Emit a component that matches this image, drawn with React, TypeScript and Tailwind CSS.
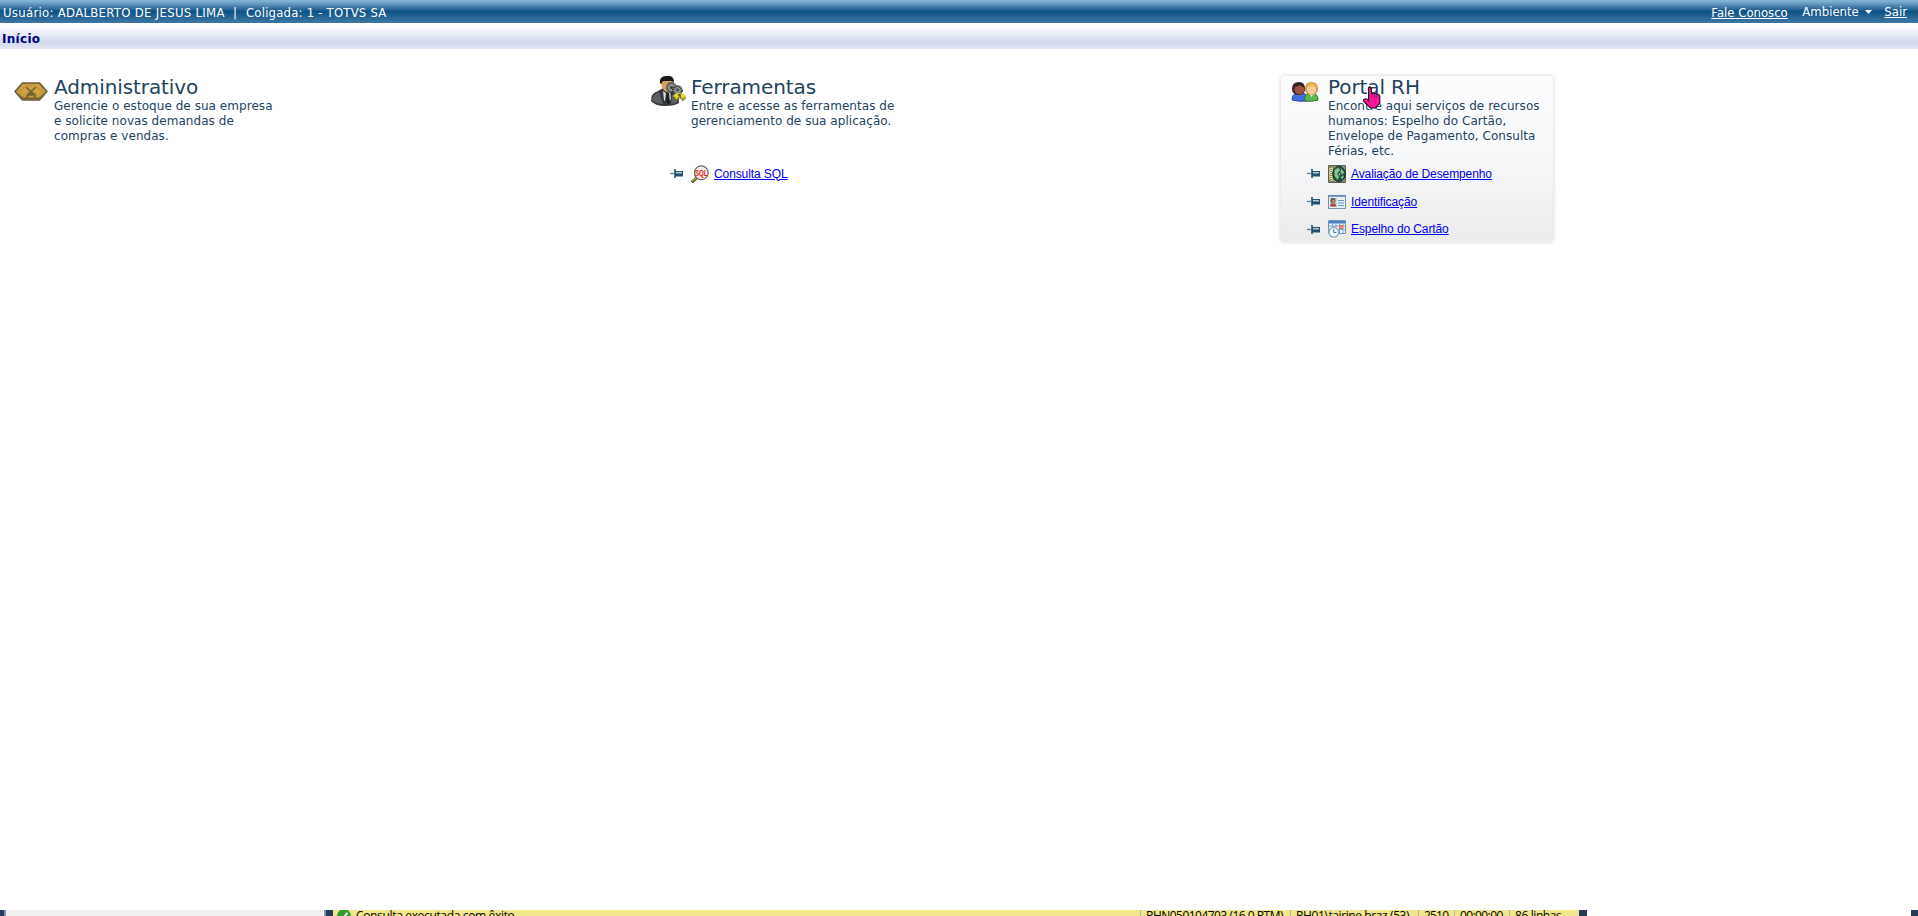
import React from 'react';

const PinIcon: React.FC = () => (
    <svg className="w-[13px] h-[9px] shrink-0" viewBox="0 0 13 9">
        <path d="M0 4.5h4" stroke="#5f859c" strokeWidth="1.4" />
        <path d="M5 0v9" stroke="#24506c" strokeWidth="1.6" />
        <path d="M5 2h8v5.5H5z" fill="#24506c" />
        <path d="M6 3.7h6" stroke="#b4cbd8" strokeWidth="1.5" />
    </svg>
);

const BoxIcon: React.FC = () => (
    <svg className="w-[34px] h-[22px]" viewBox="0 0 34 22">
        <path d="M8.5 2h17L33 10.5 25.5 19h-17L1 10.5z" fill="#c39739" stroke="#66603f" strokeWidth="1.6" />
        <path d="M2.5 11.5l6.5 7h16l6.5-7-6.5 5H9z" fill="#7b6334" />
        <path d="M9.5 3.5h15l5.5 6.5-6 5.5H10L4 10z" fill="#cfa144" />
        <path d="M12 6l5 4.5-4.5 4M22 6l-5 4.5 5 4M12 17l5-5 5 5M14 14h6" fill="none" stroke="#6f6231" strokeWidth="1.4" />
        <path d="M6 10l5-4 4 4-5 4M28 10l-5-4-4 4 5 4M13 5h8" fill="none" stroke="#a77a2c" strokeDasharray="1 1" />
    </svg>
);

const ToolsIcon: React.FC = () => (
    <svg className="w-[36px] h-[30px]" viewBox="0 0 36 30">
        <path d="M0 25q0-8 7-10l5-3h8l5 4q3 3 3 11-4 3-14 3T0 25z" fill="#36393b" />
        <path d="M1 24q1-6 7-8l4 12q-8 0-11-4zM20 27l2-10 5 9q-3 2-7 2z" fill="#5b5f61" />
        <path d="M12 15l4 3 3-3 1 8-4 5-3-4z" fill="#dededc" />
        <path d="M15 17h3l1 9-2 3-3-3z" fill="#202326" />
        <path d="M10 5q0-4 6-4 7 0 7 6 0 8-7 9-6-2-6-11z" fill="#d5a35d" />
        <path d="M9 7Q8 0 16 0q7-1 7 6l-3-1-8 0-2 3z" fill="#151719" />
        <circle cx="20.5" cy="11.5" r="4.6" fill="#8d9090" stroke="#3b4042" strokeWidth="2" strokeDasharray="1.2 .8" />
        <circle cx="20.5" cy="11.5" r="1.5" fill="#383c3e" />
        <circle cx="26.5" cy="14.5" r="4.4" fill="#8d9292" stroke="#303537" strokeWidth="2" strokeDasharray="1.2 .8" />
        <circle cx="26.5" cy="14" r="1.4" fill="#45494a" />
        <path d="M22 20q2-3 6-3t7 3l-1 4-5-2-4 2z" fill="#e3d72c" />
        <path d="M23 21l2 3 4-3 3 3 3-3" fill="none" stroke="#6e7423" strokeWidth="1.8" strokeDasharray="2 .8" />
        <circle cx="28.5" cy="19" r="1.5" fill="#5c6220" />
    </svg>
);

const PeopleIcon: React.FC = () => (
    <svg className="w-[28px] h-[22px]" viewBox="0 0 28 22">
        <path d="M1 19q0-6 5-7h7q4 3 3 8-8 1-15-1z" fill="#3f6ee0" stroke="#2a4aa5" />
        <path d="M14 20q-1-7 4-8h4q5 1 5 7-6 2-13 1z" fill="#5bb84c" stroke="#2b742c" />
        <path d="M17 11l3.5 5 3.5-5z" fill="#f3e7c3" />
        <path d="M6 12l3 3 3-3z" fill="#ae6048" />
        <path d="M1 8q0-7 7-7 6 0 6 7 0 5-5 6-8 0-8-6z" fill="#3a2624" />
        <ellipse cx="8.5" cy="8.5" rx="5" ry="4.8" fill="#a0513f" />
        <path d="M3.5 6q1-4 5-4t5 5q-3-2-5-3-2 2-5 2z" fill="#2e2326" />
        <path d="M14 8q0-7 6.5-7T27 8q0 5-6.5 6Q14 13 14 8z" fill="#cc9139" />
        <ellipse cx="20.5" cy="8.7" rx="4.8" ry="4.8" fill="#f6cc97" />
        <path d="M15 7q1-5 6-5t5 5q-3-1-5-3-2 2-6 3z" fill="#e5b257" />
    </svg>
);

const SqlIcon: React.FC = () => (
    <svg className="w-[18px] h-[18px]" viewBox="0 0 18 18">
        <path d="M.8 17.2l5.5-5" stroke="#3d4426" strokeWidth="3" />
        <path d="M1 16.5l5-4.5" stroke="#bcc838" strokeWidth="1.2" />
        <circle cx="10.3" cy="7.7" r="6.9" fill="#fbeae6" stroke="#6d6866" strokeWidth="1.2" />
        <text x="4" y="10.8" fontFamily="Liberation Sans, sans-serif" fontSize="8.5" fontWeight="bold" textLength="12.6" lengthAdjust="spacingAndGlyphs" fill="#d82a20">SQL</text>
    </svg>
);

const EvaluationIcon: React.FC = () => (
    <svg className="w-[18px] h-[18px]" viewBox="0 0 18 18">
        <path d="M.5.5h17v17H.5z" fill="#8d937e" stroke="#5a6352" />
        <path d="M1 2l4-1v16l-4-2z" fill="#f2e6ac" stroke="#5b6042" strokeWidth=".6" />
        <path d="M3 2v13" stroke="#393e2d" strokeWidth="1.2" strokeDasharray="1 1" />
        <ellipse cx="11" cy="9" rx="6.3" ry="7.6" fill="#245544" stroke="#152e23" />
        <path d="M6.5 5l4-2.5 1.5 3L9 8.5l2 3-1.5 3.5-3-4.5zM13 3.5l3.5 4-2.5 2-1.5-2zM12.5 12l3.5-1.5-1.5 4z" fill="#7fc78a" />
        <path d="M10.5 8l2 1-1 1.5z" fill="#d8ead0" />
    </svg>
);

const IdCardIcon: React.FC = () => (
    <svg className="w-[18px] h-[14px]" viewBox="0 0 18 14">
        <path d="M.5.5h17v13H.5z" fill="#e6f0fa" stroke="#7790ab" />
        <path d="M.5 1h17" stroke="#5b82b4" strokeWidth="1.5" />
        <path d="M2 3h6.5v8.5H2z" fill="#b7b6b5" />
        <circle cx="5" cy="5.5" r="2.4" fill="#694a3d" />
        <circle cx="5.3" cy="6" r="1.4" fill="#c99268" />
        <path d="M2 11.5q0-3 3-3t3.5 3z" fill="#a84c32" />
        <path d="M10 5.5h6M10 8h6M10 10.5h6" stroke="#6d96c4" />
    </svg>
);

const CalendarIcon: React.FC = () => (
    <svg className="w-[18px] h-[18px]" viewBox="0 0 18 18">
        <path d="M.5.5h17v13H.5z" fill="#edf4fc" stroke="#6f93bd" />
        <path d="M1 1h16v2.5H1z" fill="#4a82c2" />
        <path d="M4.5 3v10M8 3v10M11.5 3v10M15 3v10M1 6h16M1 9.5h16" stroke="#7da6d3" />
        <path d="M11 5h4v4h-4z" fill="#ed6c45" />
        <path d="M12.5 6.5h1.3v1.3h-1.3z" fill="#fbd9c8" />
        <circle cx="5.8" cy="12.3" r="4.9" fill="#f3f9fc" stroke="#7fa5c0" strokeWidth="1.3" />
        <path d="M5.8 9v3.5h2.7" fill="none" stroke="#396c93" />
    </svg>
);

const HandCursor: React.FC = () => (
    <svg className="absolute left-[82px] top-[10px] w-[18px] h-[23px]" viewBox="0 0 18 23">
        <path d="M5.5 1.5Q6.5.2 8 1.5l.8 6q1.3-1.3 2.7.3 1.5-.9 2.5.8 1.8-.6 2.8 1.2v7.1L12.5 22H7.4L1 15.7q-1.1-2 .7-2.8 1.5-.5 3 .8L5.6 15z" fill="#ff1499" stroke="#181018" strokeWidth="1.1" />
        <path d="M8.8 7.5v3.7M11.5 8v3.5M14 9v3" stroke="#702050" strokeWidth=".8" />
    </svg>
);

const MenuLink: React.FC<{ label: string; icon: React.ReactNode; className?: string }> = ({ label, icon, className }) => (
    <li className={`flex items-center pl-[26px] ${className ?? 'h-[27px]'}`}>
        <PinIcon />
        <span className="ml-[8px] mr-[5px] flex w-[18px] shrink-0 justify-center">{icon}</span>
        <a href="#" className="font-['Liberation_Sans',sans-serif] text-[12px] leading-[14px] tracking-[-0.1px] text-[#0000ee] underline whitespace-nowrap">{label}</a>
    </li>
);

const ModuleCard: React.FC<{
    title: string;
    lines: string[];
    icon: React.ReactNode;
    className?: string;
    children?: React.ReactNode;
}> = ({ title, lines, icon, className, children }) => (
    <section className={`relative w-[272px] h-[166px] ${className ?? ''}`}>
        <div className="flex h-[84px]">
            <div className="w-[47px] shrink-0">{icon}</div>
            <div className="whitespace-nowrap text-[#234260]">
                <h2 className="text-[20px] leading-[23px] tracking-[-0.1px]">{title}</h2>
                {lines.map(line => <p key={line} className="text-[12px] leading-[15px] tracking-[0.05px]">{line}</p>)}
            </div>
        </div>
        <ul>{children}</ul>
    </section>
);

// Small status cell of the query result bar
const StatusCell: React.FC<{ text: string; className: string }> = ({ text, className }) => (
    <span className={`shrink-0 border-l border-[#b9b894] pl-[5px] h-[18px] mt-[-2px] ${className}`}>{text}</span>
);

export default function App() {
    return (
        <div className="flex h-[916px] w-[1918px] flex-col overflow-hidden bg-white font-['DejaVu_Sans',sans-serif]">
            <header className="flex h-[23px] shrink-0 items-center justify-between bg-linear-to-b from-[#7eb1d4] from-5% via-[#0b5386] via-50% to-[#3c78a5] pl-[3px] pr-[11px] text-[13px] text-white font-['DejaVu_Sans_Condensed','DejaVu_Sans',sans-serif]">
                <div className="flex whitespace-pre pt-[2px]">
                    <span className="w-[221px] tracking-[0.3px]">Usuário: ADALBERTO DE JESUS LIMA</span>
                    <span className="w-[22px] text-center">|</span>
                    <span className="tracking-[0.2px]">Coligada: 1 - TOTVS SA</span>
                </div>
                <nav className="flex items-center whitespace-nowrap">
                    <a href="#" className="mt-[2px] w-[91px] underline">Fale Conosco</a>
                    <span className="flex w-[82px] items-center">
                        Ambiente
                        <svg className="ml-[6px] h-[4px] w-[7px]" viewBox="0 0 7 4"><path d="M0 0h7L3.5 4z" fill="white" /></svg>
                    </span>
                    <a href="#" className="underline">Sair</a>
                </nav>
            </header>
            <div className="flex h-[26px] shrink-0 items-center bg-linear-to-b from-white from-15% via-[#d2daed] via-72% to-[#e4e7f7] pl-[2px] pt-[5px] text-[12px] font-bold tracking-[0.3px] text-[#000080]">
                Início
            </div>

            <main className="flex flex-1 gap-[365px] pl-[7px] pt-[27px]">
                <ModuleCard
                    title="Administrativo"
                    lines={['Gerencie o estoque de sua empresa', 'e solicite novas demandas de', 'compras e vendas.']}
                    icon={<div className="pl-[7px] pt-[5px]"><BoxIcon /></div>}
                />
                <ModuleCard
                    title="Ferramentas"
                    lines={['Entre e acesse as ferramentas de', 'gerenciamento de sua aplicação.']}
                    icon={<div className="pl-[7px]"><ToolsIcon /></div>}
                >
                    <MenuLink label="Consulta SQL" icon={<SqlIcon />} />
                </ModuleCard>
                <ModuleCard
                    title="Portal RH"
                    className="rounded-[3px] bg-linear-to-b from-[#fdfdfe] via-[#f8f9fb] via-45% to-[#ebebeb] shadow-[0_0_4px_rgba(0,0,0,0.18)]"
                    lines={['Encontre aqui serviços de recursos', 'humanos: Espelho do Cartão,', 'Envelope de Pagamento, Consulta', 'Férias, etc.']}
                    icon={<div className="pl-[10px] pt-[5px]"><PeopleIcon /></div>}
                >
                    <MenuLink label="Avaliação de Desempenho" icon={<EvaluationIcon />} />
                    <MenuLink label="Identificação" icon={<IdCardIcon />} className="h-[29px]" />
                    <MenuLink label="Espelho do Cartão" icon={<CalendarIcon />} className="h-[26px]" />
                    <HandCursor />
                </ModuleCard>
            </main>

            <footer className="flex h-[6px] shrink-0 overflow-hidden whitespace-nowrap font-['Open_Sans',sans-serif] text-[12px] leading-[16px] text-black">
                <div className="w-[6px] border-r-2 border-[#8790aa] bg-[#263a5c]" />
                <div className="w-[317px] bg-[#f0f0f0]" />
                <div className="ml-px w-[9px] border-l-2 border-[#8790aa] bg-[#263a5c]" />
                <div className="flex w-[1246px] bg-[#f0e68c]">
                    <svg className="ml-[4px] mt-[-1px] h-[14px] w-[14px] shrink-0" viewBox="0 0 15 15">
                        <circle cx="7.5" cy="7.5" r="7.5" fill="#35992f" />
                        <path d="M3.5 8l3 3 4.5-7" fill="none" stroke="white" strokeWidth="2" />
                    </svg>
                    <span className="ml-[5px] mt-[-2px] w-[785px] tracking-[-0.34px]">Consulta executada com êxito.</span>
                    <StatusCell text="RHN050104703 (16.0 RTM)" className="w-[150px] tracking-[-0.52px]" />
                    <StatusCell text="RH01\tairine.braz (53)" className="w-[128px] tracking-[-0.4px]" />
                    <StatusCell text="2510" className="w-[36px] tracking-[-0.8px]" />
                    <StatusCell text="00:00:00" className="w-[55px] tracking-[-0.6px]" />
                    <StatusCell text="86 linhas" className="w-[70px] tracking-[-0.4px]" />
                </div>
                <div className="w-[8px] bg-[#263a5c]" />
                <div className="ml-auto w-[7px] bg-[#263a5c]" />
            </footer>
        </div>
    );
}
